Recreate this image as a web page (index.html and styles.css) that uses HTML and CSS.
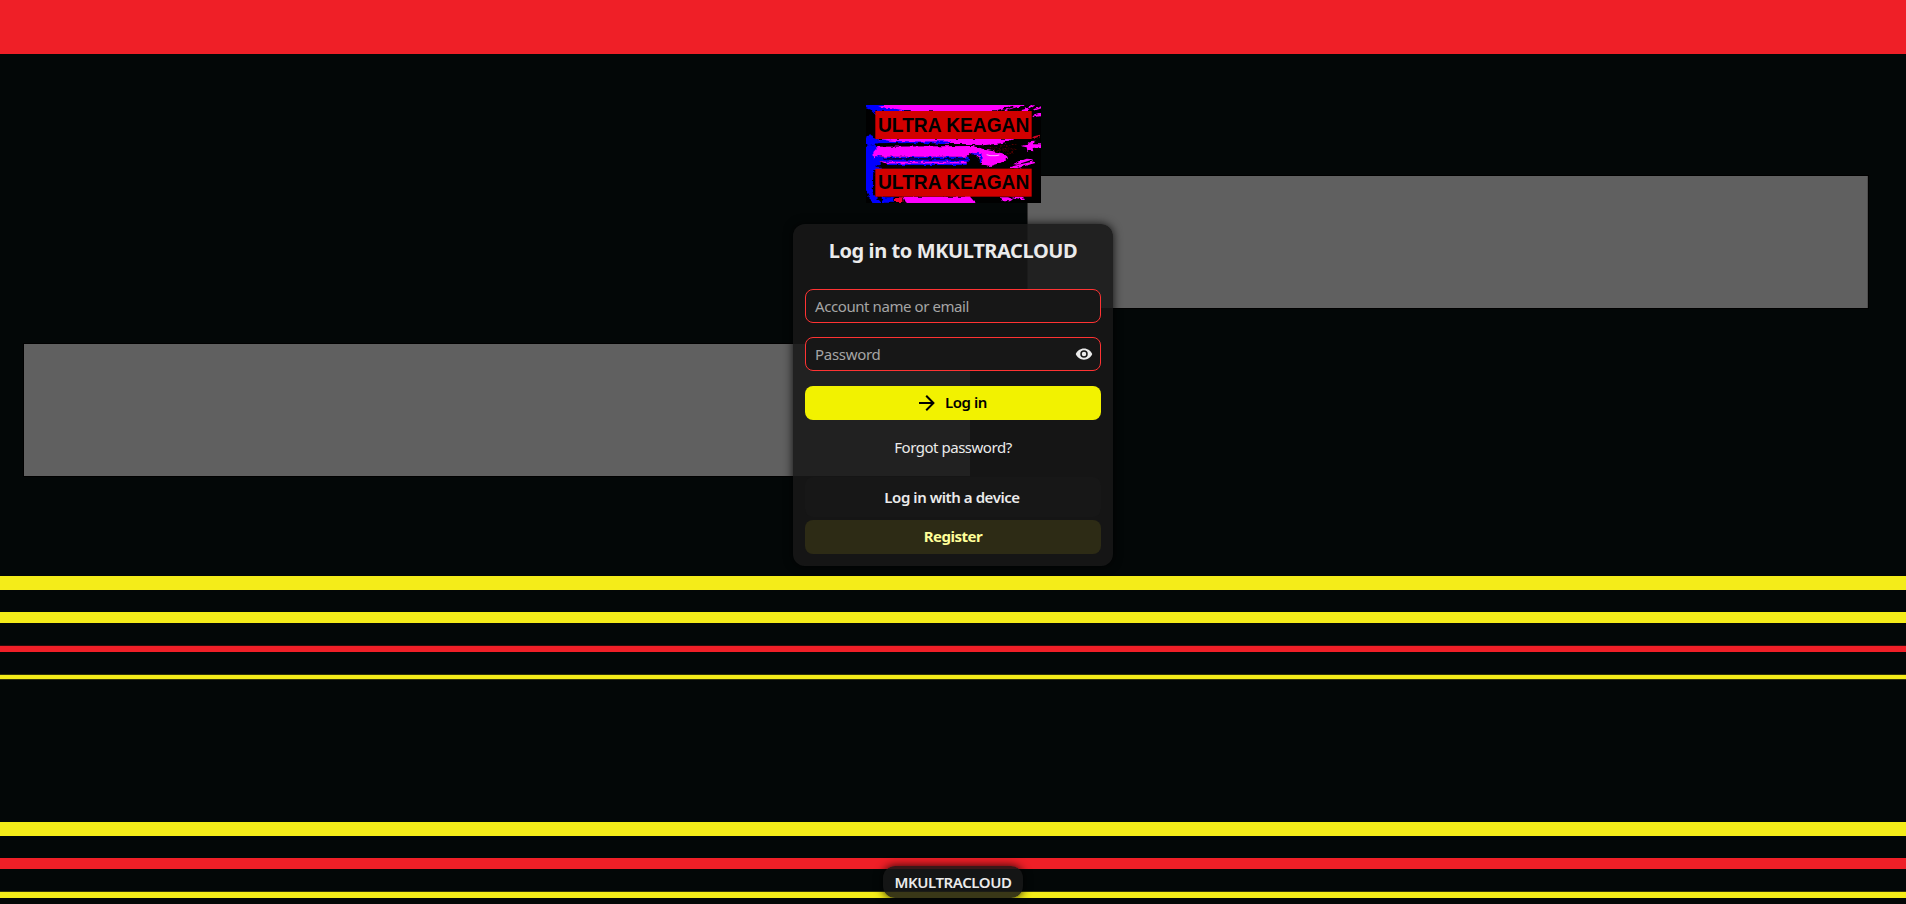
FILE: index.html
```html
<!DOCTYPE html>
<html lang="en">
<head>
<meta charset="utf-8">
<title>MKULTRACLOUD</title>
<link rel="stylesheet" href="styles.css">
</head>
<body>
<svg class="backdrop" width="1906" height="904" viewBox="0 0 1906 904" aria-hidden="true">
  <rect width="1906" height="904" fill="#030707"/>
  <rect width="1906" height="54" fill="#ef1f27"/>
  <rect x="1027" y="175" width="842" height="134" fill="#000"/>
  <rect x="1027.5" y="176" width="840.3" height="132" fill="#606060"/>
  <rect x="23" y="343" width="948" height="134" fill="#000"/>
  <rect x="24" y="344" width="946" height="132" fill="#606060"/>
  <g fill="#f4ec19">
    <rect y="576" width="1906" height="14"/>
    <rect y="612" width="1906" height="11"/>
    <rect y="674.8" width="1906" height="4.4"/>
    <rect y="822" width="1906" height="14"/>
    <rect y="891.8" width="1906" height="6.2"/>
  </g>
  <g fill="#ef1f27">
    <rect y="645.8" width="1906" height="6.2"/>
    <rect y="858" width="1906" height="11"/>
  </g>
</svg>
<div class="page">
  <header class="brand">
    <svg class="logo" viewBox="48 45 525 294" role="img" aria-label="Ultra Keagan">
      <defs>
        <filter id="ragged" x="0" y="0" width="1" height="1">
          <feTurbulence type="fractalNoise" baseFrequency=".06 .12" numOctaves="2" seed="4"/>
          <feDisplacementMap in="SourceGraphic" scale="11" xChannelSelector="R" yChannelSelector="G"/>
        </filter>
      </defs>
      <g filter="url(#ragged)">
      <rect x="40" y="37" width="541" height="310" fill="#000"/>
      <path fill="#0000ff" d="M40 40H300L180 64H76V74L62 60L40 52ZM50 138L66 136L76 148H260L230 156L90 160L60 168L44 160ZM40 172L72 166L92 176V240L70 240L68 310L100 344H70L52 310L40 280ZM92 200H356V214H92ZM94 322H130V338H100Z"/>
      <path fill="#ff00ff" d="M84 50L130 42H528L500 54L462 64H180L140 57ZM528 56L548 46H556L530 63H505ZM550 58L581 46V53L552 62ZM546 78L581 68V77L552 82ZM120 146H494L455 160L400 166L260 160L80 150ZM84 170L370 168L400 178L460 190L474 202L460 216L420 228L398 224L388 202L364 188L350 200H100L84 198L72 208L70 186ZM90 214H350V222H110ZM510 168L535 164V154L554 152L552 163H581V170L548 174L550 184L532 182L530 172ZM486 222L530 206L550 208L500 224ZM470 234L490 228L552 214L556 219L500 235ZM160 320H360L380 342H170ZM448 322H474L490 328L480 334H460ZM480 320H516L522 330Z"/>
      <path stroke="#0000ff" stroke-width="5" fill="none" d="M76 152L130 157H300M110 223H350M364 192H392V222"/>
      <path stroke="#000" stroke-width="5" fill="none" d="M75 163L370 165L410 178M80 228H400M100 207H350M440 63L490 50M470 63L520 48M358 196H380"/>
      <path stroke="#0000ff" stroke-width="5" fill="none" d="M100 212H360"/>
      <path stroke="#8b0000" stroke-width="2" stroke-dasharray="5 4" fill="none" d="M410 172L500 178M430 182L490 184M450 168L500 162M470 192L492 188"/>
      <path fill="#ff0030" d="M136 322H160V336H134Z"/>
      <path fill="#d00020" d="M546 140L570 134V139L550 146Z"/>
      </g>
      <path stroke="#ffb4ff" stroke-width="3" fill="none" d="M410 194L420 197H438L448 195"/>
      <g fill="#d20000"><rect x="76" y="63" width="469" height="84"/><rect x="76" y="236" width="469" height="84"/></g>
      <g class="logo-text"><text x="84" y="124.500" textLength="454" lengthAdjust="spacingAndGlyphs">ULTRA KEAGAN</text><text x="84" y="298" textLength="454" lengthAdjust="spacingAndGlyphs">ULTRA KEAGAN</text></g>
    </svg>
  </header>
  <main class="card">
    <h1 class="title">Log in to MKULTRACLOUD</h1>
    <form class="form">
      <label class="field"><span class="hint hint-account">Account name or email</span></label>
      <label class="field"><span class="hint hint-password">Password</span>
        <svg class="eye" viewBox="0 0 24 24"><path fill="#ebebeb" d="M12 9a3 3 0 0 0-3 3 3 3 0 0 0 3 3 3 3 0 0 0 3-3 3 3 0 0 0-3-3m0 8a5 5 0 0 1-5-5 5 5 0 0 1 5-5 5 5 0 0 1 5 5 5 5 0 0 1-5 5m0-12.500C7 4.500 2.730 7.610 1 12c1.730 4.390 6 7.500 11 7.500s9.270-3.110 11-7.500c-1.730-4.390-6-7.500-11-7.500Z"/></svg>
      </label>
      <button class="button primary" type="button">
        <svg class="arrow" viewBox="0 0 24 24"><path fill="#000" d="M4 11V13H16L10.500 18.500 11.920 19.920 19.840 12 11.920 4.080 10.500 5.500 16 11H4Z"/></svg>
        <span class="login-text">Log in</span>
      </button>
    </form>
    <a class="forgot">Forgot password?</a>
    <button class="button device" type="button"><span>Log in with a device</span></button>
    <button class="button register" type="button"><span>Register</span></button>
  </main>
  <footer class="footer">MKULTRACLOUD</footer>
</div>
</body>
</html>
```
FILE: styles.css
```css
* { box-sizing: border-box; }
body { margin: 0; overflow: hidden; background: #030707; font-family: "Noto Sans", "Open Sans", sans-serif; font-size: 15px; color: #ebebeb; }
.backdrop { position: absolute; inset: 0; z-index: -1; display: block; }
.page { height: 904px; display: flex; flex-direction: column; align-items: center; padding: 105px 0 6px; }
.brand { height: 98px; margin-bottom: 21px; }
.logo { display: block; width: 175px; height: 98px; }
.logo-text { font: bold 59px "Liberation Sans", Arial, sans-serif; fill: #000; }
.card { width: 320px; height: 342px; padding: 12px; display: flex; flex-direction: column; background: rgba(24, 24, 24, .87); border-radius: 12px; box-shadow: 0 0 10px rgba(0, 0, 0, .85); }
.title { margin: 0; height: 53px; font-size: 20px; line-height: 30px; font-weight: 700; text-align: center; white-space: nowrap; letter-spacing: -.4px; }
.form { display: flex; flex-direction: column; }
.field { height: 34px; margin-bottom: 14px; padding: 0 7px 0 9px; display: flex; align-items: center; justify-content: space-between; border: 1px solid #ff3333; border-radius: 8px; background: #171717; }
.hint { color: #a5a5a5; white-space: nowrap; letter-spacing: -.42px; }
.hint-password { letter-spacing: -.3px; }
.field + .field { margin-bottom: 15px; }
.eye { width: 18px; height: 18px; }
.button { height: 34px; padding: 0 2px 2px 0; border: 0; border-radius: 8px; display: flex; align-items: center; justify-content: center; font: 600 15px "Noto Sans", "Open Sans", sans-serif; letter-spacing: -.43px; color: #ebebeb; }
.primary { padding: 0 4px 0 0; background: #f2f200; color: #000; gap: 8px; }
.login-text { padding-bottom: 2px; }
.arrow { width: 24px; height: 24px; margin-right: -2px; }
.forgot { height: 57px; line-height: 54px; text-align: center; letter-spacing: -.48px; color: #ebebeb; }
.device { height: 40px; margin-bottom: 3px; padding-bottom: 0; background: #171717; }
.register { padding-right: 0; background: #2d2b15; color: #ffff99; font-weight: 700; letter-spacing: -.5px; }
.footer { margin-top: auto; width: 140px; height: 32px; line-height: 32px; text-align: center; font-weight: 600; letter-spacing: -.42px; border-radius: 12px; background: rgba(24, 24, 24, .85); box-shadow: 0 0 10px rgba(0, 0, 0, .85); }
```
